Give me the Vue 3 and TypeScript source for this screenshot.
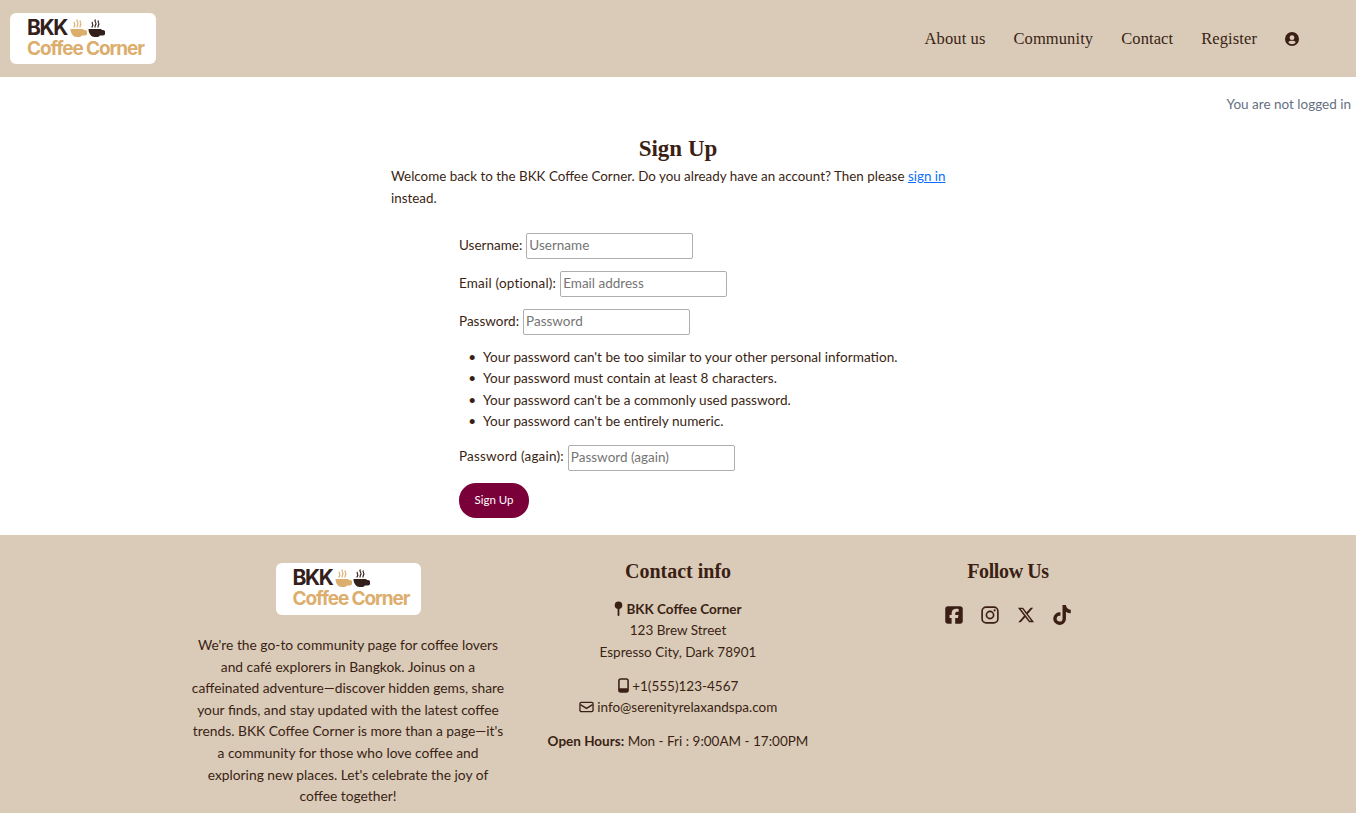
<script setup lang="ts">
const navLinks = ['About us', 'Community', 'Contact', 'Register']

const rules = [
  "Your password can't be too similar to your other personal information.",
  'Your password must contain at least 8 characters.',
  "Your password can't be a commonly used password.",
  "Your password can't be entirely numeric.",
]

const aboutLines = [
  "We're the go-to community page for coffee lovers",
  'and café explorers in Bangkok. Joinus on a',
  'caffeinated adventure—discover hidden gems, share',
  'your finds, and stay updated with the latest coffee',
  "trends. BKK Coffee Corner is more than a page—it's",
  'a community for those who love coffee and',
  "exploring new places. Let's celebrate the joy of",
  'coffee together!',
]
</script>

<template>
  <div class="page">
    <header class="topbar">
      <a class="logo" href="#">
        <span class="logo-top">
          <span class="logo-bkk">BKK</span>
          <svg class="cup" viewBox="0 0 34 36"><path d="M1 20h26v2h2a5.500 5.500 0 0 1 0 11h-5c-2 2-4 3-7 3h-4C7 36 1 29 1 20z" fill="#dcae6e"/><path d="M15 1c-5 4 5 7 0 11 0 0-1 2-1 5M21 3c-4 3 4 6 0 9-1 1-1 3-1 5M9 6c-3 3 3 5 0 8-1 1-1 2-1 3" fill="none" stroke="#dcae6e" stroke-width="2.400"/></svg>
          <svg class="cup" viewBox="0 0 34 36"><path d="M1 20h26v2h2a5.500 5.500 0 0 1 0 11h-5c-2 2-4 3-7 3h-4C7 36 1 29 1 20z" fill="#33201b"/><path d="M15 1c-5 4 5 7 0 11 0 0-1 2-1 5M21 3c-4 3 4 6 0 9-1 1-1 3-1 5M9 6c-3 3 3 5 0 8-1 1-1 2-1 3" fill="none" stroke="#33201b" stroke-width="2.400"/></svg>
        </span>
        <span class="logo-name">Coffee Corner</span>
      </a>
      <nav class="nav">
        <a v-for="link in navLinks" :key="link" href="#">{{ link }}</a>
        <svg class="user-icon" viewBox="0 0 512 512"><path fill-rule="evenodd" d="M256 0a256 256 0 1 0 0 512 256 256 0 0 0 0-512zm0 120a88 88 0 1 1 0 176 88 88 0 0 1 0-176zM256 448c-52 0-100-23-133-60 10-38 44-66 85-66h96c41 0 75 28 85 66-33 37-81 60-133 60z"/></svg>
      </nav>
    </header>

    <main class="main">
      <p class="login-state">You are not logged in</p>
      <section class="signup">
        <h1>Sign Up</h1>
        <p class="intro">
          Welcome back to the BKK Coffee Corner. Do you already have an account? Then please
          <a href="#">sign in</a> instead.
        </p>
        <form class="form" @submit.prevent>
          <div class="field">
            <label for="username">Username:</label>
            <input id="username" type="text" placeholder="Username" />
          </div>
          <div class="field">
            <label class="wide-label" for="email">Email (optional):</label>
            <input id="email" type="email" placeholder="Email address" />
          </div>
          <div class="field">
            <label for="password">Password:</label>
            <input id="password" type="password" placeholder="Password" />
          </div>
          <ul class="rules">
            <li v-for="rule in rules" :key="rule">{{ rule }}</li>
          </ul>
          <div class="field">
            <label class="wide-label" for="password2">Password (again):</label>
            <input id="password2" type="password" placeholder="Password (again)" />
          </div>
          <button type="submit">Sign Up</button>
        </form>
      </section>
    </main>

    <footer class="footer">
      <div class="col">
        <a class="logo" href="#">
          <span class="logo-top">
            <span class="logo-bkk">BKK</span>
            <svg class="cup" viewBox="0 0 34 36"><path d="M1 20h26v2h2a5.500 5.500 0 0 1 0 11h-5c-2 2-4 3-7 3h-4C7 36 1 29 1 20z" fill="#dcae6e"/><path d="M15 1c-5 4 5 7 0 11 0 0-1 2-1 5M21 3c-4 3 4 6 0 9-1 1-1 3-1 5M9 6c-3 3 3 5 0 8-1 1-1 2-1 3" fill="none" stroke="#dcae6e" stroke-width="2.400"/></svg>
            <svg class="cup" viewBox="0 0 34 36"><path d="M1 20h26v2h2a5.500 5.500 0 0 1 0 11h-5c-2 2-4 3-7 3h-4C7 36 1 29 1 20z" fill="#33201b"/><path d="M15 1c-5 4 5 7 0 11 0 0-1 2-1 5M21 3c-4 3 4 6 0 9-1 1-1 3-1 5M9 6c-3 3 3 5 0 8-1 1-1 2-1 3" fill="none" stroke="#33201b" stroke-width="2.400"/></svg>
          </span>
          <span class="logo-name">Coffee Corner</span>
        </a>
        <p class="about">
          <span v-for="line in aboutLines" :key="line">{{ line }}</span>
        </p>
      </div>

      <div class="col">
        <h2>Contact info</h2>
        <address class="contact">
          <p>
            <svg class="pin" viewBox="0 0 12 20"><circle cx="6" cy="5.500" r="5"/><rect x="4.800" y="9" width="2.400" height="11" rx="1"/></svg>
            <strong>BKK Coffee Corner</strong><br />
            123 Brew Street<br />
            Espresso City, Dark 78901
          </p>
          <p>
            <svg class="inline-icon phone" viewBox="0 0 12 16"><rect x="1" y="1" width="10" height="14" rx="2" fill="none" stroke="currentColor" stroke-width="1.700"/><rect x="1" y="11" width="10" height="4" fill="currentColor"/></svg>
            +1(555)123-4567<br />
            <svg class="inline-icon mail" viewBox="0 0 16 12"><rect x="1" y="1" width="14" height="10" rx="1.500" fill="none" stroke="currentColor" stroke-width="1.400"/><path d="M1.500 3.500 8 7.500l6.500-4" fill="none" stroke="currentColor" stroke-width="1.400"/></svg>
            info@serenityrelaxandspa.com
          </p>
          <p><strong>Open Hours:</strong> Mon - Fri : 9:00AM - 17:00PM</p>
        </address>
      </div>

      <div class="col">
        <h2 class="follow-title">Follow Us</h2>
        <div class="socials">
          <a href="#" aria-label="Facebook">
            <svg viewBox="0 0 448 512"><path d="M64 32C28.700 32 0 60.700 0 96V416c0 35.300 28.700 64 64 64h98.200V334.200H109.400V256h52.800V222.300c0-87.100 39.400-127.500 125-127.500c16.200 0 44.200 3.200 55.700 6.400V172c-6-.6-16.500-1-29.600-1c-42 0-58.200 15.900-58.200 57.200V256h83.600l-14.400 78.200H255V480H384c35.300 0 64-28.700 64-64V96c0-35.300-28.700-64-64-64H64z"/></svg>
          </a>
          <a href="#" aria-label="Instagram">
            <svg viewBox="0 0 448 512"><rect x="22" y="54" width="404" height="404" rx="105" fill="none" stroke="currentColor" stroke-width="42"/><circle cx="224" cy="256" r="92" fill="none" stroke="currentColor" stroke-width="42"/><circle cx="342" cy="138" r="27"/></svg>
          </a>
          <a href="#" aria-label="X">
            <svg viewBox="0 0 512 512"><path d="M389.200 48h70.600L305.600 224.200 487 464H345L233.700 318.600 106.500 464H35.800L200.700 275.500 26.800 48H172.400L272.900 180.900 389.200 48zM364.400 421.800h39.100L151.100 88h-42L364.400 421.800z"/></svg>
          </a>
          <a href="#" aria-label="TikTok">
            <svg viewBox="0 0 448 512"><path d="M448 209.910a210.060 210.060 0 0 1-122.770-39.250V349.380A162.550 162.550 0 1 1 185 188.310V278.200a74.620 74.620 0 1 0 52.230 71.180V0l88 0a121.180 121.180 0 0 0 1.860 22.170h0A122.180 122.180 0 0 0 381 102.390a121.430 121.430 0 0 0 67 20.140Z"/></svg>
          </a>
        </div>
      </div>
    </footer>
  </div>
</template>

<style>
html,
body {
  margin: 0;
  background: #fff;
}
</style>

<style scoped>
.page {
  height: 813px;
  overflow: hidden;
  display: flex;
  flex-direction: column;
  font-family: Lato, "Noto Sans", sans-serif;
  font-size: 13.500px;
  line-height: 21.400px;
  color: #3b1f14;
}

a {
  color: inherit;
  text-decoration: none;
}

p {
  margin: 0;
}

/* header */
.topbar {
  height: 77px;
  flex: none;
  display: flex;
  align-items: flex-start;
  justify-content: space-between;
  background: #d9cbb8;
  padding: 13px 57px 0 10px;
  box-sizing: border-box;
}

.logo {
  width: 146px;
  height: 51px;
  flex: none;
  display: flex;
  flex-direction: column;
  background: #fff;
  border-radius: 6px;
  padding: 5px 0 0 17px;
  box-sizing: border-box;
  font-family: Inter, sans-serif;
  font-weight: 700;
}

.logo-top {
  display: flex;
  align-items: center;
  height: 19px;
  gap: 1px;
}

.logo-bkk {
  font-size: 21px;
  line-height: 19px;
  letter-spacing: -1.400px;
  color: #33201b;
  margin-right: 2px;
}

.cup {
  width: 17px;
  height: 18px;
}

.logo-name {
  font-size: 19px;
  line-height: 24px;
  letter-spacing: -1.100px;
  color: #dcae6e;
  white-space: nowrap;
}

.nav {
  display: flex;
  align-items: center;
  gap: 28px;
  height: 51px;
  font-family: "Liberation Serif", serif;
  font-size: 16.500px;
  letter-spacing: 0.100px;
}

.user-icon {
  width: 14px;
  height: 14px;
  fill: #3b1f14;
}

/* sign up */
.main {
  flex: 1;
  min-height: 0;
  padding: 16px 5px 0;
}

.login-state {
  text-align: right;
  color: #667080;
  line-height: 22px;
}

.signup {
  width: 574px;
  margin: 19px auto 0;
}

h1,
h2 {
  font-family: "Liberation Serif", serif;
  font-weight: 700;
  text-align: center;
  margin: 0;
}

h1 {
  font-size: 23px;
  line-height: 29px;
}

.intro {
  margin-top: 2px;
  line-height: 22px;
  font-size: 13.400px;
}

.intro a {
  color: #0d6efd;
  text-decoration: underline;
}

.form {
  margin: 24px 0 0 68px;
}

.field {
  display: flex;
  align-items: center;
  gap: 4px;
  height: 26px;
  margin-bottom: 12px;
}

label {
  margin-bottom: 1px;
}

.wide-label {
  letter-spacing: 0.200px;
}

input {
  width: 167px;
  height: 26px;
  box-sizing: border-box;
  border: 1px solid #aeaeae;
  border-radius: 2px;
  padding: 0 2px 2px;
  font: inherit;
  color: inherit;
  background: #fff;
}

input::placeholder {
  color: #757575;
}

.rules {
  margin: 0 0 12px;
  padding-left: 24px;
  font-size: 13.600px;
}

.rules li::marker {
  content: "•  ";
}

button {
  display: block;
  width: 70px;
  height: 35px;
  border: 0;
  border-radius: 17px;
  background: #7a0039;
  color: #fff;
  font: inherit;
  font-size: 11.500px;
}

/* footer */
.footer {
  height: 278px;
  flex: none;
  display: grid;
  grid-template-columns: repeat(3, 330px);
  justify-content: center;
  background: #d9cbb8;
  padding-top: 24px;
  box-sizing: border-box;
  text-align: center;
}

.col {
  min-width: 0;
}

.col > .logo {
  margin: 4px auto 0;
  width: 145px;
  height: 52px;
  text-align: left;
}

.about {
  margin-top: 19px;
  line-height: 21.600px;
  font-size: 13.800px;
}

.about span {
  display: block;
}

h2 {
  font-size: 20px;
  line-height: 24px;
}

.follow-title {
  letter-spacing: -0.400px;
}

.contact {
  margin-top: 16px;
  font-style: normal;
}

.contact p {
  margin-bottom: 12.500px;
}

.contact svg {
  fill: currentColor;
  vertical-align: -2px;
}

.pin {
  width: 9px;
  height: 15px;
  margin-right: 3px;
}

.inline-icon.phone {
  width: 11px;
  height: 15px;
}

.inline-icon.mail {
  width: 15px;
  height: 12px;
  vertical-align: -1px;
}

.inline-icon {
  fill: none;
}

.socials {
  display: flex;
  justify-content: center;
  gap: 18px;
  margin-top: 22px;
}

.socials a {
  display: flex;
}

.socials svg {
  width: 18px;
  height: 20px;
  fill: currentColor;
}
</style>
